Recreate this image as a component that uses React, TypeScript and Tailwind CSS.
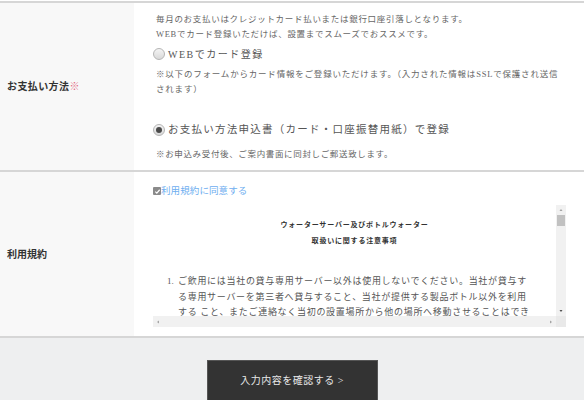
import React from 'react'

const FONT = "font-['Liberation_Serif','Noto_Sans_CJK_JP',serif]"

function Radio({ checked }: { checked?: boolean }) {
  return (
    <span className="flex h-[12px] w-[12px] shrink-0 items-center justify-center rounded-full border border-[#b5b5b5] bg-gradient-to-b from-[#f4f4f4] to-[#d9d9d9]">
      {checked && <span className="h-[6px] w-[6px] rounded-full bg-[#4a4a4a]" />}
    </span>
  )
}

function Label({ children }: { children: React.ReactNode }) {
  return (
    <div className="flex w-[134px] shrink-0 items-center bg-[#f8f8f8] pl-[7px] text-[10px] font-bold tracking-[0.4px] text-[#333]">
      {children}
    </div>
  )
}

export default function App() {
  return (
    <div className={`${FONT} h-[400px] w-[584px] overflow-hidden bg-white`}>
      <div className="h-px" />

      {/* お支払い方法 */}
      <div className="flex border-t-2 border-[#d6d6d6]">
        <Label>
          お支払い方法<span className="text-[#e36a83]">※</span>
        </Label>
        <div className="flex-1 pb-[8px] pl-[22px] pt-[9px] text-[#666]">
          <p className="whitespace-nowrap text-[8.5px] leading-[15px] tracking-[0.7px]">
            毎月のお支払いはクレジットカード払いまたは銀行口座引落しとなります。
            <br />
            WEBでカード登録いただけば、設置までスムーズでおススメです。
          </p>
          <div className="mt-[4px] flex h-[16px] items-center gap-[3px]">
            <span className="-ml-[3px]"><Radio /></span>
            <span className="whitespace-nowrap text-[10px] tracking-[1.5px] text-[#555]">WEBでカード登録</span>
          </div>
          <p className="mt-[5px] whitespace-nowrap text-[8.5px] leading-[15px] tracking-[0.8px]">
            ※以下のフォームからカード情報をご登録いただけます。（入力された情報はSSLで保護され送信
            <br />
            されます）
          </p>
          <div className="mt-[25px] flex h-[16px] items-center gap-[3px]">
            <span className="-ml-[3px]"><Radio checked /></span>
            <span className="whitespace-nowrap text-[10.5px] tracking-[1.25px] text-[#555]">
              お支払い方法申込書（カード・口座振替用紙）で登録
            </span>
          </div>
          <p className="mt-[9px] whitespace-nowrap text-[8.5px] leading-[15px] tracking-[0.65px]">
            ※お申込み受付後、ご案内書面に同封しご郵送致します。
          </p>
        </div>
      </div>

      {/* 利用規約 */}
      <div className="flex border-t-2 border-[#d6d6d6]">
        <Label>
          <span className="tracking-[0]">利用規約</span>
        </Label>
        <div className="flex-1 pb-[9px] pl-[19px] pt-[11px]">
          <label className="flex h-[16px] items-center">
            <span className="flex h-[8px] w-[8px] items-center justify-center rounded-[1px] bg-[#8a8a8a]">
              <svg viewBox="0 0 8 8" className="h-[7px] w-[7px]">
                <path d="M1.5 4.2 L3.2 5.8 L6.5 2" fill="none" stroke="#fff" strokeWidth="1.4" />
              </svg>
            </span>
            <span className="whitespace-nowrap text-[9.5px] tracking-[0.1px] text-[#6eaef0]">利用規約に同意する</span>
          </label>

          <div className="mt-[6px] grid h-[122px] w-[413px] grid-cols-[403px_10px] grid-rows-[111px_11px]">
            <div className="overflow-hidden bg-white">
              <div className="pt-[12px] text-center text-[7px] font-bold leading-[16px] tracking-[0.8px] text-[#333]">
                <p>ウォーターサーバー及びボトルウォーター</p>
                <p>取扱いに関する注意事項</p>
              </div>
              <div className="mt-[25px] flex pl-[14px] text-[9px] leading-[15.5px] tracking-[0.7px] text-[#555]">
                <span className="w-[11px] shrink-0 tracking-[0]">1.</span>
                <p className="whitespace-nowrap">
                  ご飲用には当社の貸与専用サーバー以外は使用しないでください。当社が貸与す
                  <br />
                  る専用サーバーを第三者へ貸与すること、当社が提供する製品ボトル以外を利用
                  <br />
                  する こと、またご連絡なく当初の設置場所から他の場所へ移動させることはでき
                </p>
              </div>
            </div>

            {/* vertical scrollbar */}
            <div className="flex flex-col items-center bg-[#f1f1f1]">
              <svg viewBox="0 0 10 10" className="h-[10px] w-[10px]">
                <path d="M3.5 6 L5 4 L6.5 6 Z" fill="#a3a3a3" />
              </svg>
              <div className="h-[11px] w-[8px] bg-[#c1c1c1]" />
              <div className="flex-1" />
              <svg viewBox="0 0 10 10" className="h-[10px] w-[10px]">
                <path d="M3.5 4 L5 6 L6.5 4 Z" fill="#505050" />
              </svg>
            </div>

            {/* horizontal scrollbar */}
            <div className="flex items-center justify-between bg-[#f1f1f1]">
              <svg viewBox="0 0 10 10" className="h-[10px] w-[10px]">
                <path d="M6 3.5 L4 5 L6 6.5 Z" fill="#a3a3a3" />
              </svg>
              <svg viewBox="0 0 10 10" className="h-[10px] w-[10px]">
                <path d="M4 3.5 L6 5 L4 6.5 Z" fill="#a3a3a3" />
              </svg>
            </div>
            <div className="bg-[#e9e9e9]" />
          </div>
        </div>
      </div>

      {/* 確認ボタン */}
      <div className="flex h-[70px] justify-center border-t-2 border-[#d6d6d6] bg-[#eeeff0] pt-[22px]">
        <button className="flex h-[44px] w-[171px] justify-center border border-[#555] bg-[#333] pt-[12px] text-[10px] tracking-[0.5px] text-[#e8e8e8]">
          入力内容を確認する &gt;
        </button>
      </div>
    </div>
  )
}
